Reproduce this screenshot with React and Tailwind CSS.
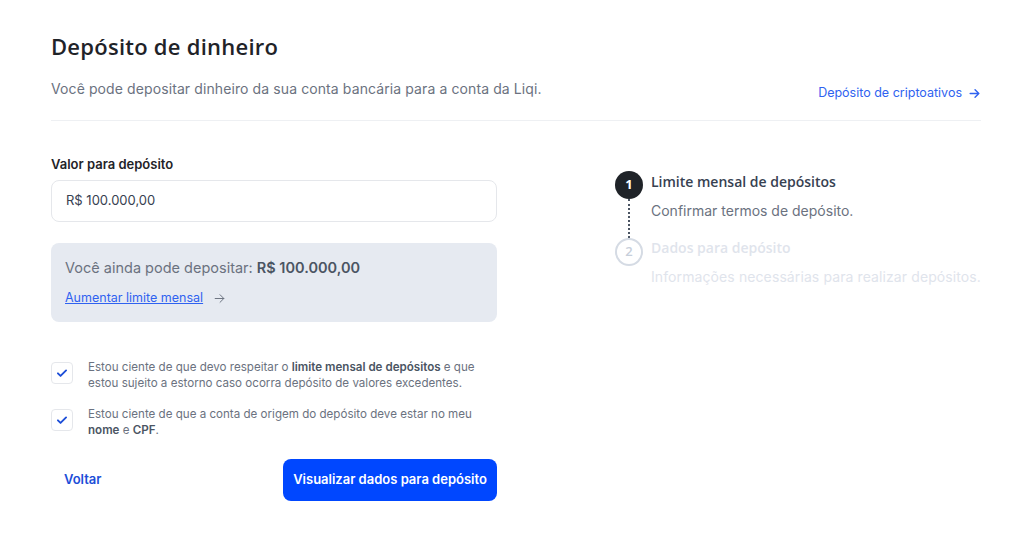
import React from "react";

const Check = () => (
  <svg width="14" height="14" viewBox="0 0 24 24" fill="none" stroke="#1d4ed8" strokeWidth="3.2" strokeLinecap="round" strokeLinejoin="round">
    <path d="M5 12.5l4.5 4.5L19 7.5" />
  </svg>
);

const Arrow = ({ color = "currentColor", w = 2 }) => (
  <svg width="13" height="13" viewBox="0 0 24 24" fill="none" stroke={color} strokeWidth={w} strokeLinecap="round" strokeLinejoin="round">
    <path d="M4 12h16M13 5l7 7-7 7" />
  </svg>
);

export default function App() {
  const inter = { fontFamily: "Inter, 'Liberation Sans', sans-serif" };
  const head = { fontFamily: "'Open Sans', Lato, sans-serif" };
  return (
    <div className="w-[1024px] h-[550px] bg-white overflow-hidden" style={inter}>
      <div className="pl-[51px] pr-[43px] pt-[31px]">
        <h1 className="text-[22px] leading-[30px] font-semibold text-[#1f2328] tracking-[0.25px]" style={head}>Depósito de dinheiro</h1>
        <div className="flex items-end justify-between mt-[18px] pb-[21px] border-b border-[#eef0f3]">
          <p className="text-[14px] leading-[20px] text-[#6b7280] tracking-[0.1px]">Você pode depositar dinheiro da sua conta bancária para a conta da Liqi.</p>
          <a className="flex items-center gap-[6px] text-[12.5px] leading-[18px] text-[#2f62f0] mb-[-3px]">
            Depósito de criptoativos <Arrow color="#2f62f0" w={2.6} />
          </a>
        </div>
        <div className="flex mt-[35px]">
          <div className="w-[446px]">
            <label className="block text-[13px] leading-[16px] font-semibold text-[#1f2328]">Valor para depósito</label>
            <div className="mt-[8px] h-[42px] rounded-[8px] border border-[#e5e7eb] flex items-center px-[14px] text-[13px] text-[#374151]">R$ 100.000,00</div>
            <div className="mt-[21px] h-[79px] rounded-[8px] bg-[#e6eaf1] px-[14px] pt-[15px]">
              <p className="text-[14.5px] leading-[20px] text-[#6b7280]">Você ainda pode depositar: <span className="font-semibold text-[#4b5563]">R$ 100.000,00</span></p>
              <div className="mt-[12px] flex items-center gap-[10px]">
                <a className="text-[12.5px] leading-[16px] text-[#2f62f0] underline">Aumentar limite mensal</a>
                <span className="text-[#6b7280]"><Arrow w={1.8} /></span>
              </div>
            </div>
            <div className="mt-[37px] flex gap-[15px]">
              <div className="w-[22px] h-[22px] mt-[3px] shrink-0 rounded-[4px] border border-[#e5e7eb] flex items-center justify-center"><Check /></div>
              <p className="text-[11.6px] leading-[16px] text-[#6b7280]">Estou ciente de que devo respeitar o <b className="font-semibold text-[#4b5563]">limite mensal de depósitos</b> e que estou sujeito a estorno caso ocorra depósito de valores excedentes.</p>
            </div>
            <div className="mt-[15px] flex gap-[15px]">
              <div className="w-[22px] h-[22px] mt-[3px] shrink-0 rounded-[4px] border border-[#e5e7eb] flex items-center justify-center"><Check /></div>
              <p className="text-[11.6px] leading-[16px] text-[#6b7280] pr-[20px]">Estou ciente de que a conta de origem do depósito deve estar no meu <b className="font-semibold text-[#4b5563]">nome</b> e <b className="font-semibold text-[#4b5563]">CPF</b>.</p>
            </div>
            <div className="mt-[21px] flex items-center justify-between">
              <button className="ml-[13px] text-[13px] font-semibold text-[#1d4ed8]">Voltar</button>
              <button className="w-[214px] h-[42px] rounded-[8px] bg-[#0047ff] text-white text-[13px] font-semibold">Visualizar dados para depósito</button>
            </div>
          </div>
          <div className="ml-[118px] mt-[15px]">
            <div className="flex gap-[8px]">
              <div className="flex flex-col items-center w-[28px]">
                <div className="w-[28px] h-[28px] rounded-full bg-[#1f2328] text-white text-[13px] font-bold flex items-center justify-center" style={head}>1</div>
                <div className="h-[39px] border-l-[2px] border-dotted border-[#4b5563]"></div>
              </div>
              <div className="pt-[1px]">
                <p className="text-[14px] leading-[20px] font-semibold text-[#374151]" style={head}>Limite mensal de depósitos</p>
                <p className="mt-[9px] text-[14px] leading-[20px] text-[#6b7280]">Confirmar termos de depósito.</p>
              </div>
            </div>
            <div className="flex gap-[8px]">
              <div className="w-[28px] h-[28px] rounded-full border-[2px] border-[#d5dbe4] text-[#c7cfdb] text-[13px] font-semibold flex items-center justify-center" style={head}>2</div>
              <div>
                <p className="text-[14px] leading-[20px] font-semibold text-[#dfe4ec]" style={head}>Dados para depósito</p>
                <p className="mt-[9px] text-[14px] leading-[20px] text-[#dfe4ec] tracking-[0.1px]">Informações necessárias para realizar depósitos.</p>
              </div>
            </div>
          </div>
        </div>
      </div>
    </div>
  );
}
